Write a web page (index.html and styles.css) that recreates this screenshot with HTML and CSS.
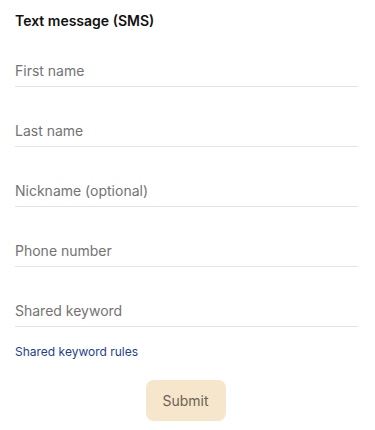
FILE: index.html
```html
<!DOCTYPE html>
<html lang="en">
<head>
<meta charset="utf-8">
<title>Text message (SMS)</title>
<link rel="stylesheet" href="styles.css">
</head>
<body>
<form class="form">
  <h2 class="title">Text message (SMS)</h2>
  <div class="fields">
    <div class="field">First name</div>
    <div class="field">Last name</div>
    <div class="field">Nickname (optional)</div>
    <div class="field">Phone number</div>
    <div class="field">Shared keyword</div>
  </div>
  <a class="link" href="#">Shared keyword rules</a>
  <div class="actions">
    <button type="button" class="submit">Submit</button>
  </div>
</form>
</body>
</html>
```
FILE: styles.css
```css
html, body {
  margin: 0;
  padding: 0;
  background: #ffffff;
}
body {
  font-family: Inter, "Noto Sans", "Liberation Sans", sans-serif;
  -webkit-font-smoothing: antialiased;
}
.form {
  padding: 11px 17px 0 15px;
  display: flex;
  flex-direction: column;
}
.title {
  margin: 0;
  font-size: 14px;
  line-height: 20px;
  font-weight: 600;
  color: #111111;
}
.fields {
  display: flex;
  flex-direction: column;
  gap: 4px;
}
.field {
  padding: 30px 0 5px;
  font-size: 14px;
  line-height: 20px;
  color: #737373;
  border-bottom: 1px solid #e4e4e4;
}
.link {
  margin-top: 17px;
  font-size: 12px;
  line-height: 16px;
  color: #1d3f8e;
  text-decoration: none;
  align-self: flex-start;
}
.actions {
  display: flex;
  justify-content: center;
  margin-top: 20px;
  padding-right: 2px;
}
.submit {
  width: 80px;
  height: 41px;
  border: none;
  border-radius: 8px;
  background: #f6e6cb;
  color: #6b6255;
  font-family: inherit;
  font-size: 14px;
  padding: 0;
}
```
